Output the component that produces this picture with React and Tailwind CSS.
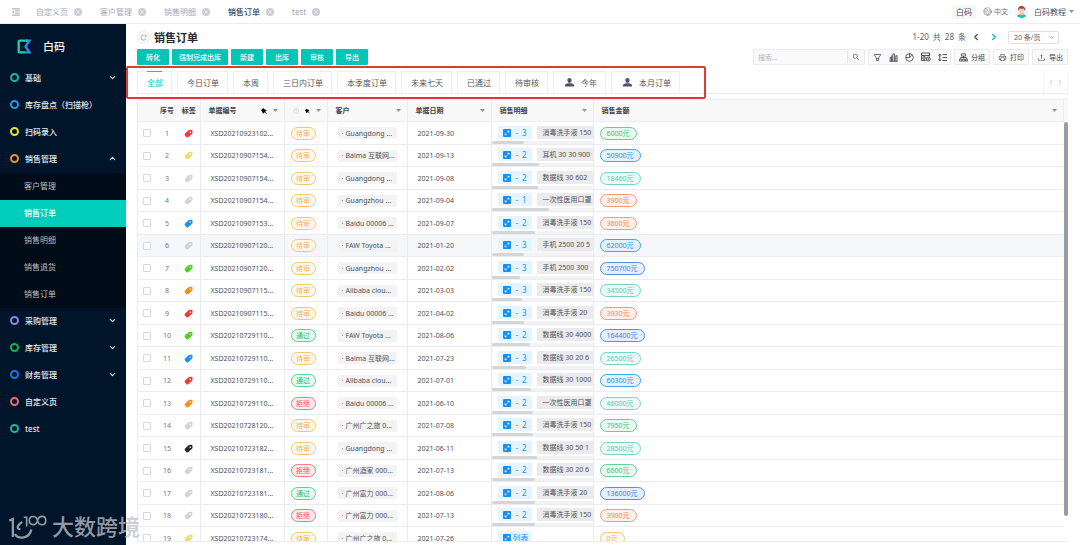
import React, { useState } from 'react';
import { ChevronDown, ChevronUp, ChevronLeft, ChevronRight, X, Earth } from 'lucide-react';
import {
  AiOutlineMenuFold,
  AiOutlineReload,
  AiOutlineSearch,
  AiOutlineFilter,
  AiOutlinePrinter,
  AiOutlineUpload,
  AiFillPushpin,
  AiOutlineQuestionCircle,
} from 'react-icons/ai';

const openPages = ['自定义页', '客户管理', '销售明细', '销售订单', 'test'];

const menu = [
  { label: '基础', ring: 'border-[#13b8a6]', arrow: 'down' },
  { label: '库存盘点（扫描枪）', ring: 'border-[#1f9be0]' },
  { label: '扫码录入', ring: 'border-[#e6e034]' },
  {
    label: '销售管理',
    ring: 'border-[#ee8f2e]',
    arrow: 'up',
    children: ['客户管理', '销售订单', '销售明细', '销售退货', '销售订单'],
  },
  { label: '采购管理', ring: 'border-[#8f86e8]', arrow: 'down' },
  { label: '库存管理', ring: 'border-[#10b548]', arrow: 'down' },
  { label: '财务管理', ring: 'border-[#1f72e8]', arrow: 'down' },
  { label: '自定义页', ring: 'border-[#ee6a6f]' },
  { label: 'test', ring: 'border-[#13b8a6]' },
];

const actions = ['转化', '强制完成出库', '新建', '出库', '审核', '导出'];

const views = [
  { label: '全部' },
  { label: '今日订单' },
  { label: '本周' },
  { label: '三日内订单' },
  { label: '本季度订单' },
  { label: '未来七天' },
  { label: '已通过' },
  { label: '待审核' },
  { label: '今年', personal: true },
  { label: '本月订单', personal: true },
];

const statusStyles = {
  待审: 'border-[#f3c47c] bg-[#fff8ea] text-[#eeb460]',
  通过: 'border-[#5fce8f] bg-[#e6fbef] text-[#3dbb74]',
  拒绝: 'border-[#ee7c80] bg-[#fdeaea] text-[#e85a60]',
};

const amountStyles = {
  green: 'border-[#62cf93] bg-[#eafaf1] text-[#46c07d]',
  blue: 'border-[#36a9f0] bg-[#e2f3ff] text-[#2196e8]',
  teal: 'border-[#79d3c6] bg-[#eafaf7] text-[#5cc8b8]',
  orange: 'border-[#f79a7a] bg-[#fff0ea] text-[#f5855f]',
  indigo: 'border-[#5b8be6] bg-[#e5eefe] text-[#4a7ce0]',
  yellow: 'border-[#f3c47c] bg-[#fff8ea] text-[#eeb460]',
};

const tagColors = {
  red: 'text-[#f03a3a]',
  yellow: 'text-[#ebdc74]',
  gray: 'text-[#d3d4d6]',
  blue: 'text-[#1890f5]',
  green: 'text-[#4bd11e]',
  orange: 'text-[#fa8c16]',
  black: 'text-[#2a2a2a]',
};

// tag, order no, status, customer, date, detail count, first detail, scroll thumb width, amount, amount colour
const orders = [
  ['red', 'XSD20210923102...', '待审', 'Guangdong ...', '2021-09-30', 3, '消毒洗手液 150', 32, '6000', 'green'],
  ['yellow', 'XSD20210907154...', '待审', 'Baima 互联网...', '2021-09-13', 2, '耳机 30 30 900', 47, '50900', 'blue'],
  ['gray', 'XSD20210907154...', '待审', 'Guangdong ...', '2021-09-08', 2, '数据线 30 602', 46, '18460', 'teal'],
  ['gray', 'XSD20210907154...', '待审', 'Guangzhou ...', '2021-09-04', 1, '一次性医用口罩', 57, '3900', 'orange'],
  ['blue', 'XSD20210907153...', '待审', 'Baidu 00006 ...', '2021-09-07', 2, '消毒洗手液 150', 43, '3600', 'orange'],
  ['gray', 'XSD20210907120...', '待审', 'FAW Toyota ...', '2021-01-20', 3, '手机 2500 20 5', 32, '62000', 'blue'],
  ['green', 'XSD20210907120...', '待审', 'Guangzhou ...', '2021-02-02', 3, '手机 2500 300', 28, '750700', 'indigo'],
  ['orange', 'XSD20210907115...', '待审', 'Alibaba clou...', '2021-03-03', 3, '消毒洗手液 150', 30, '34500', 'teal'],
  ['red', 'XSD20210907115...', '待审', 'Baidu 00006 ...', '2021-04-02', 3, '消毒洗手液 20', 32, '3930', 'orange'],
  ['green', 'XSD20210729110...', '通过', 'FAW Toyota ...', '2021-08-06', 2, '数据线 30 4000', 38, '164400', 'indigo'],
  ['blue', 'XSD20210729110...', '待审', 'Baima 互联网...', '2021-07-23', 3, '数据线 30 20 6', 34, '26500', 'teal'],
  ['red', 'XSD20210729110...', '通过', 'Alibaba clou...', '2021-07-01', 2, '数据线 30 1000', 39, '60300', 'blue'],
  ['orange', 'XSD20210729110...', '拒绝', 'Baidu 00006 ...', '2021-06-10', 2, '一次性医用口罩', 41, '46000', 'teal'],
  ['gray', 'XSD20210728120...', '待审', '广州广之旅 0...', '2021-07-08', 2, '消毒洗手液 150', 41, '7950', 'green'],
  ['black', 'XSD20210723182...', '待审', 'Guangdong ...', '2021-06-11', 2, '数据线 30 50 1', 45, '28500', 'teal'],
  ['gray', 'XSD20210723181...', '拒绝', '广州酒家 000...', '2021-07-13', 2, '数据线 30 20 6', 43, '6600', 'green'],
  ['gray', 'XSD20210723181...', '通过', '广州富力 000...', '2021-08-06', 2, '消毒洗手液 20', 43, '136000', 'indigo'],
  ['gray', 'XSD20210723180...', '拒绝', '广州富力 000...', '2021-07-13', 2, '消毒洗手液 150', 43, '3900', 'orange'],
  ['yellow', 'XSD20210723174...', '待审', '广州广之旅 0...', '2021-07-26', 0, '', 0, '0', 'yellow'],
];

const Caret = ({ className = 'text-[#8d93a3]' }) => (
  <svg viewBox="0 0 10 6" className={`w-[5px] h-[3px] shrink-0 ${className}`} fill="currentColor">
    <path d="M0 0h10L5 6z" />
  </svg>
);

const TagIcon = ({ className }) => (
  <svg viewBox="0 0 18 18" className={`size-[9px] ${className}`} fill="currentColor">
    <path
      fillRule="evenodd"
      d="M9 2.500Q10 1.500 12 1.500h3q2 0 2 2V7q0 1.500-1 2.500L9.500 15.500Q7 18 4.500 15.800L2 13.200Q0 11 2.200 9zM12.500 5a1.600 1.600 0 1 0 .1 3.200A1.600 1.600 0 0 0 12.500 5z"
    />
  </svg>
);

const UserIcon = () => (
  <svg viewBox="0 0 18 18" className="size-[9px]" fill="#4b5568">
    <path d="M9 0c2.600 0 4.200 1.900 4.200 4.600S11.400 10 9 10 4.800 7.300 4.800 4.600 6.400 0 9 0zM0 17v-2.500c0-2.200 3-3.300 6.200-3.900h5.600c3.200.6 6.200 1.700 6.200 3.900V17z" />
  </svg>
);

const Logo = () => (
  <svg viewBox="0 0 45 45" className="size-[15px]">
    <path d="M26 5H9q-4 0-4 4v27q0 4 4 4h17" fill="none" stroke="#19d3b4" strokeWidth="7" />
    <path d="M26 1.500h18L30 22.500 44 43.500H26v-7h5L21.500 22.500 31 8.500h-5z" fill="#2b8df0" />
    <path d="M26 1.500h6v7h-6z" fill="#1fc0c8" />
  </svg>
);

const Avatar = () => (
  <svg viewBox="0 0 40 40" className="size-[13px]">
    <defs>
      <clipPath id="avatar-clip">
        <circle cx="20" cy="20" r="20" />
      </clipPath>
    </defs>
    <g clipPath="url(#avatar-clip)">
      <rect width="40" height="40" fill="#eef4f7" />
      <ellipse cx="20" cy="40" rx="17" ry="12" fill="#12c4b8" />
      <rect x="16" y="21" width="8" height="11" fill="#f0b79d" />
      <ellipse cx="20" cy="17" rx="8" ry="10" fill="#fccdb6" />
      <path d="M10 17Q8 3 20 3t11 14l-3-1-1-5q-7 2-13-1l-1 6z" fill="#a83c46" />
    </g>
  </svg>
);

const BarsIcon = () => (
  <svg viewBox="0 0 20 20" className="size-[9px]" fill="none" stroke="currentColor" strokeWidth="1.800">
    <path d="M1 18.500h18M2.500 18V9.500h3.500V18M6 18V5.500M8.500 18V2h3.500v16M15 18V6h3v12" />
  </svg>
);

const PieIcon = () => (
  <svg viewBox="0 0 20 20" className="size-[9px]" fill="none" stroke="currentColor" strokeWidth="1.800">
    <circle cx="10" cy="10" r="8.500" />
    <path d="M10 1.500V10h-8M10 10l5-5" />
  </svg>
);

const TableConfigIcon = () => (
  <svg viewBox="0 0 20 20" className="size-[10px]" fill="none" stroke="currentColor" strokeWidth="1.800">
    <path d="M1 2h16v5H1zM1 7v5h9M17 7v2M1 12v5h8M4 14.500h4M4 9.500h5" />
    <circle cx="14.500" cy="14" r="4" />
    <circle cx="14.500" cy="14" r="1" />
  </svg>
);

const RowHeightIcon = () => (
  <svg viewBox="0 0 20 20" className="size-[9px]" fill="none" stroke="currentColor" strokeWidth="2">
    <path d="M4 3v14M1 6l3-4 3 4M1 14l3 4 3-4M10 3.500h10M10 10h10M10 16.500h10" />
  </svg>
);

const GroupIcon = () => (
  <svg viewBox="0 0 20 20" className="size-[9px]" fill="none" stroke="currentColor" strokeWidth="1.800">
    <path d="M5.500 2h9v5h-9zM10 7v5M3.500 13v-3h13v3M1 13.500h5v4.500H1zM8 13.500h4.500v4.500H8zM14.500 13.500H19v4.500h-4.500z" />
  </svg>
);

const ExpandIcon = () => (
  <svg viewBox="0 0 16 16" className="size-2">
    <rect width="16" height="16" rx="2" fill="#1590f2" />
    <path d="M9 4h3v3zM4 9v3h3z" fill="#fff" stroke="#fff" />
    <path d="M11 5 5 11" stroke="#fff" strokeWidth="1" strokeDasharray="3 2.500" />
  </svg>
);

const TopBar = () => (
  <header className="flex h-[24px] shrink-0 items-center border-b border-[#eeeef0] bg-white pl-[11px] pr-[6px] text-[8px] text-[#a3a8b8]">
    <button type="button" aria-label="收起菜单" className="mr-[15px] text-[#7d8398]">
      <AiOutlineMenuFold className="size-[10px]" />
    </button>
    <nav className="flex items-center gap-[18px]">
      {openPages.map((page) => (
        <div key={page} className="flex items-center gap-[6px]">
          <a href="#" className={page === '销售订单' ? 'font-medium text-[#3f4564]' : ''}>
            {page}
          </a>
          <button
            type="button"
            aria-label={`关闭 ${page}`}
            className="flex size-2 items-center justify-center rounded-full bg-[#c9ccd6] text-white"
          >
            <X className="size-[6px]" strokeWidth={2.5} />
          </button>
        </div>
      ))}
    </nav>
    <div className="ml-auto flex items-center text-[#4c5162]">
      <button type="button" className="mr-[7px] h-[14px] bg-[#f7f7f8] px-1">白码</button>
      <button type="button" className="mr-[7px] flex items-center gap-[2px] text-[7px] text-[#6c7182]">
        <Earth className="size-[9px]" strokeWidth={1.5} />
        中文
      </button>
      <button type="button" className="flex items-center">
        <Avatar />
        <span className="ml-[6px] mr-[3px]">白码教程</span>
        <Caret />
      </button>
    </div>
  </header>
);

const Sidebar = () => (
  <aside className="w-[126px] shrink-0 bg-[#001529] text-[8px] font-medium text-[#e4e8ec]">
    <div className="flex h-[41px] items-center gap-[11px] pl-[17px] pt-1 text-[11px] text-white">
      <Logo />
      白码
    </div>
    <nav>
      {menu.map((item) => (
        <div key={item.label}>
          <a href="#" className="flex h-[27px] items-center pb-0.5 pl-[10px] pr-[9px]">
            <span className={`mr-[6px] size-[9px] rounded-full border-2 ${item.ring}`} />
            <span>{item.label}</span>
            {item.arrow === 'down' && <ChevronDown className="ml-auto size-[9px]" strokeWidth={3} />}
            {item.arrow === 'up' && <ChevronUp className="ml-auto size-[9px]" strokeWidth={3} />}
          </a>
          {item.children && (
            <div className="bg-[#000c17] font-normal text-[#b9bfc6]">
              {item.children.map((child, i) => (
                <a
                  key={i}
                  href="#"
                  className={`flex h-[27px] items-center pb-0.5 pl-6 ${i === 1 ? 'bg-[#00cdbb] font-medium text-white' : ''}`}
                >
                  {child}
                </a>
              ))}
            </div>
          )}
        </div>
      ))}
    </nav>
  </aside>
);

const toolBox = 'flex h-4 items-center justify-center rounded-[1px] border border-[#ebebed] bg-[#fafafa]';

const Toolbar = () => (
  <div className="flex items-center justify-between">
    <div className="flex gap-[3px]">
      {actions.map((name) => (
        <button
          key={name}
          type="button"
          className="h-4 min-w-8 rounded-[1px] bg-[#02c6b5] px-[7px] text-[7px] font-medium text-white"
        >
          {name}
        </button>
      ))}
    </div>
    <div className="flex gap-[3px] text-[7px] text-[#3c3f46]">
      <div className={toolBox}>
        <input
          type="text"
          aria-label="搜索"
          placeholder="搜索..."
          className="w-[93px] bg-transparent pl-1 text-[7px] leading-none outline-none placeholder:text-[#b6b8bf]"
        />
        <button type="button" aria-label="查找" className="flex h-3 w-[17px] items-center justify-center border-l border-[#e6e6e8]">
          <AiOutlineSearch className="size-2" />
        </button>
      </div>
      <div className={`${toolBox} w-[83px] gap-[7px]`}>
        <button type="button" aria-label="筛选"><AiOutlineFilter className="size-[9px]" /></button>
        <button type="button" aria-label="图表"><BarsIcon /></button>
        <button type="button" aria-label="统计"><PieIcon /></button>
        <button type="button" aria-label="字段设置"><TableConfigIcon /></button>
        <button type="button" aria-label="行高"><RowHeightIcon /></button>
      </div>
      <button type="button" className={`${toolBox} w-9 gap-[3px]`}>
        <GroupIcon />
        分组
      </button>
      <button type="button" className={`${toolBox} w-9 gap-[3px]`}>
        <AiOutlinePrinter className="size-[9px]" />
        打印
      </button>
      <button type="button" className={`${toolBox} w-9 gap-[3px]`}>
        <AiOutlineUpload className="size-[9px]" />
        导出
      </button>
    </div>
  </div>
);

const ViewTabs = ({ active, onChange }) => (
  <div className="relative mt-[6px] flex h-[23px] border-b border-[#ececee]">
    <div className="flex gap-[5px]">
      {views.map((view) => (
        <button
          key={view.label}
          type="button"
          onClick={() => onChange(view.label)}
          className={`relative flex items-center border border-b-0 border-[#efeff1] pl-[9px] pr-2 text-[8px] ${
            active === view.label ? 'text-[#02c6b5]' : 'text-[#55585f]'
          }`}
        >
          {active === view.label && <span className="absolute -top-px inset-x-[9px] h-px bg-[#02c6b5]" />}
          {view.personal && (
            <span className="ml-0.5 mr-[7px]">
              <UserIcon />
            </span>
          )}
          {view.label}
        </button>
      ))}
    </div>
    <div className="ml-auto flex w-[25px] items-center justify-center gap-[3px] border-x border-[#f3f3f5] text-[#c6c8ce]">
      <button type="button" aria-label="向左"><ChevronLeft className="size-[6px]" strokeWidth={4} /></button>
      <button type="button" aria-label="向右"><ChevronRight className="size-[6px]" strokeWidth={4} /></button>
    </div>
    {/* highlighted area of view tabs */}
    <div className="pointer-events-none absolute -left-[11px] -top-[5px] h-[33px] w-[580px] rounded-[2px] border-2 border-[#e23a33]" />
  </div>
);

const Pin = () => <AiFillPushpin className="size-2 -scale-x-100 text-black" />;

const OrderTable = () => (
  <div className="mt-[5px] flex min-h-0 flex-1 overflow-hidden border-b border-l border-[#ececee]">
    <table className="w-full table-fixed border-collapse text-left text-[7px] text-[#4d5057]">
      <colgroup>
        <col className="w-[18px]" />
        <col className="w-[22px]" />
        <col className="w-[22px]" />
        <col className="w-[84px]" />
        <col className="w-[43px]" />
        <col className="w-[80px]" />
        <col className="w-[84px]" />
        <col className="w-[102px]" />
        <col />
      </colgroup>
      <thead className="bg-[#f8f8f9] text-[#3f4248]">
        <tr className="h-[22px] border-y border-[#ececee] *:p-0 *:font-bold">
          <th aria-label="选择" />
          <th><span className="flex justify-center">序号</span></th>
          <th className="border-r border-[#ececee]"><span className="flex justify-center">标签</span></th>
          <th className="border-r border-[#ececee]">
            <div className="flex items-center gap-[5px] pl-2 pr-[6px]">
              <span className="mr-auto">单据编号</span>
              <Pin />
              <Caret />
            </div>
          </th>
          <th className="border-r border-[#ececee]">
            <div className="flex items-center gap-[5px] pl-2 pr-[6px]">
              <AiOutlineQuestionCircle className="mr-auto size-2 text-[#c9cad0]" />
              <Pin />
              <Caret />
            </div>
          </th>
          {['客户', '单据日期', '销售明细', '销售金额'].map((name) => (
            <th key={name} className="border-r border-[#ececee]">
              <div className="flex items-center justify-between pl-2 pr-[6px]">
                {name}
                <Caret />
              </div>
            </th>
          ))}
        </tr>
      </thead>
      <tbody>
        {orders.map(([tag, no, status, customer, date, count, detail, thumb, amount, color], i) => (
          <tr
            key={i}
            className={`border-b border-[#ececee] *:p-0 odd:h-[23px] even:h-[22px] ${i === 5 ? 'bg-[#f5f7fb]' : ''}`}
          >
            <td>
              <input
                type="checkbox"
                aria-label={`选择 ${i + 1}`}
                className="mx-auto block size-2 appearance-none rounded-[1px] border border-[#d5d8df] bg-white"
              />
            </td>
            <td className="text-center text-[#73767d]">{i + 1}</td>
            <td className="border-r border-[#ececee]">
              <span className="flex justify-center"><TagIcon className={tagColors[tag]} /></span>
            </td>
            <td className="border-r border-[#ececee]"><span className="block pl-[10px]">{no}</span></td>
            <td className="border-r border-[#ececee]">
              <span className={`ml-[6px] flex h-[13px] w-[25px] items-center justify-center rounded-full border ${statusStyles[status]}`}>
                {status}
              </span>
            </td>
            <td className="border-r border-[#ececee]">
              <div className="ml-[10px] flex h-3 w-[59px] items-center gap-[3px] rounded-[1px] bg-[#f3f3f4] pl-1">
                <span className="size-px bg-[#8c8f96]" />
                {customer}
              </div>
            </td>
            <td className="border-r border-[#ececee]"><span className="block pl-[10px]">{date}</span></td>
            <td className="border-r border-[#ececee] align-bottom">
              <div className="overflow-hidden">
                <div className="flex gap-[5px] pl-[6px]">
                  <button type="button" className="flex h-[13px] w-[34px] shrink-0 items-center rounded-[1px] bg-[#e6f4ff] pl-[5px] text-[8px] text-[#1590f2]">
                    <ExpandIcon />
                    {count ? (
                      <>
                        <span className="ml-[5px] mr-1">-</span>
                        <span>{count}</span>
                      </>
                    ) : (
                      <span className="ml-[2px]">列表</span>
                    )}
                  </button>
                  {detail && (
                    <span className="flex h-[13px] grow items-center whitespace-nowrap bg-[#ebebed] pl-[6px]">
                      {detail}
                    </span>
                  )}
                </div>
                <div className={`mt-[2px] h-[3px] ${count ? 'bg-[#f3f3f4]' : ''}`}>
                  <div className="h-full rounded-full bg-[#d4d5d8]" style={{ width: thumb }} />
                </div>
              </div>
            </td>
            <td>
              <span className={`ml-[6px] flex h-[13px] w-fit items-center rounded-full border px-[6px] ${amountStyles[color]}`}>
                {amount}元
              </span>
            </td>
          </tr>
        ))}
      </tbody>
    </table>
    {/* vertical scrollbar */}
    <div className="w-[4px] shrink-0 border-t border-[#ececee] bg-[#f8f8f9] pt-[22px]">
      <div className="h-full bg-white">
        <div className="h-[94%] rounded-full bg-[#989ca3]" />
      </div>
    </div>
  </div>
);

const Watermark = () => (
  <div className="pointer-events-none absolute bottom-[6px] left-[9px] flex items-center gap-[5px] text-[22px] font-medium leading-[26px] text-[#b9bfc5]/80">
    <svg viewBox="0 0 114 76" className="h-[25px] w-[38px]" fill="none" stroke="currentColor" strokeWidth="7">
      <path d="M0 20 11 15v55" />
      <path d="M39 24C25 34 20 46 34 46M17 61C28 78 62 75 67 47" />
      <path d="M44 10h9v28" strokeWidth="5" />
      <path d="M86 20C82 3 61 4 61 20s21 17 25 0 25-17 25 0-21 17-25 0z" strokeWidth="5" />
    </svg>
    大数跨境
  </div>
);

const App = () => {
  const [view, setView] = useState('全部');

  return (
    <div className="relative flex h-screen flex-col overflow-hidden bg-white font-['Noto_Sans','Noto_Sans_CJK_SC',sans-serif] leading-none">
      <TopBar />
      <div className="flex min-h-0 flex-1">
        <Sidebar />
        <main className="flex min-w-0 flex-1 flex-col pb-[3px] pl-[11px] pr-3">
          <div className="flex h-[25px] items-center pt-px">
            <button
              type="button"
              aria-label="刷新"
              className="mr-1 flex size-[13px] items-center justify-center rounded-full border border-[#ececee] bg-[#fafafa] text-[#666a72]"
            >
              <AiOutlineReload className="size-[7px]" />
            </button>
            <h1 className="text-[11px] font-bold text-[#26282d]">销售订单</h1>
            <div className="ml-auto flex items-center pr-[9px] text-[8px] text-[#5a5d66]">
              <p className="flex gap-1">
                <span>1-20</span>
                <span>共</span>
                <span>28</span>
                <span>条</span>
              </p>
              <button type="button" aria-label="上一页" className="ml-[5px]">
                <ChevronLeft className="size-[10px] text-[#4d5468]" strokeWidth={3} />
              </button>
              <button type="button" aria-label="下一页" className="ml-2 mr-[9px]">
                <ChevronRight className="size-[10px] text-[#02c6b5]" strokeWidth={3.5} />
              </button>
              <div className="relative">
                <select
                  aria-label="每页条数"
                  className="block h-[13px] w-[51px] appearance-none rounded-[2px] border border-[#dfe1e6] bg-white pl-[5px] text-[7px] leading-none"
                >
                  <option>20 条/页</option>
                  <option>50 条/页</option>
                </select>
                <ChevronDown className="pointer-events-none absolute right-1 top-[3px] size-[7px]" strokeWidth={2} />
              </div>
            </div>
          </div>
          <Toolbar />
          <ViewTabs active={view} onChange={setView} />
          <OrderTable />
        </main>
      </div>
      <Watermark />
    </div>
  );
};

export default App;
